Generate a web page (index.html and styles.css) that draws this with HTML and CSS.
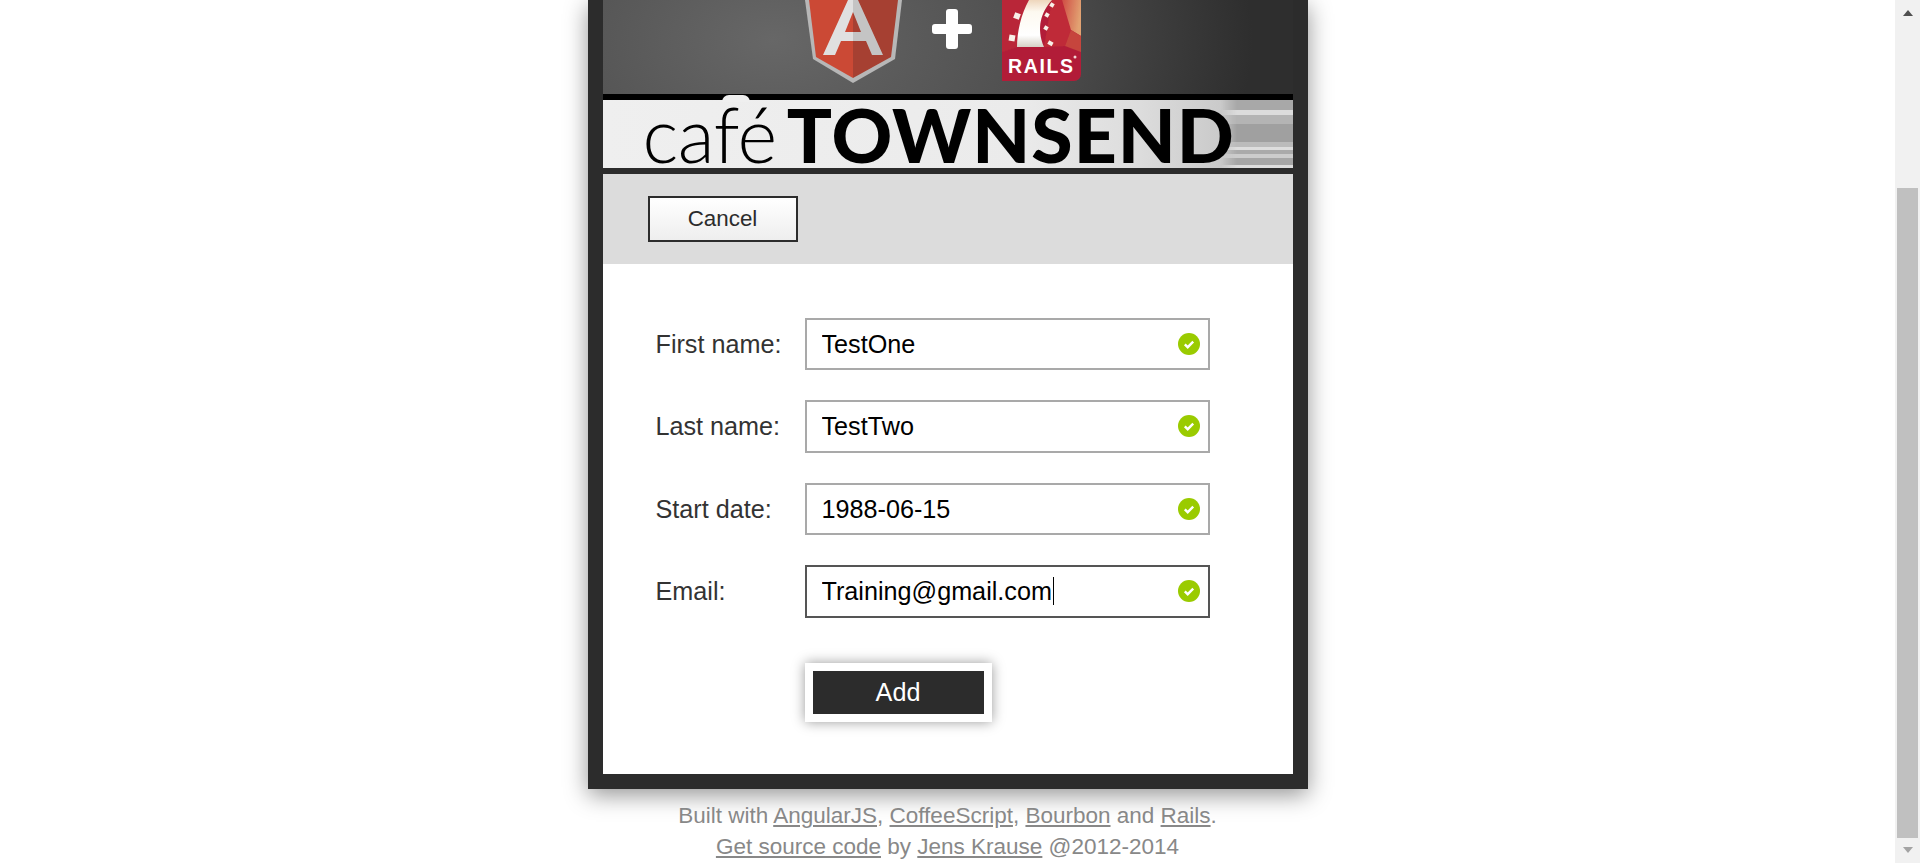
FILE: index.html
```html
<!DOCTYPE html>
<html lang="en">
<head>
<meta charset="utf-8">
<title>Café Townsend</title>
<link rel="stylesheet" href="styles.css">
</head>
<body>
<div class="screen">
  <main class="page">
    <section class="app">
      <header class="logos">
        <svg class="logos-art" viewBox="603 0 690 94" width="690" height="94" aria-label="Angular plus Rails">
          <defs>
            <linearGradient id="rails-curve" x1="0" y1="1" x2="0" y2="0">
              <stop offset="0" stop-color="#d6d2c6"/>
              <stop offset="0.25" stop-color="#ffffff"/>
              <stop offset="0.75" stop-color="#fdf9f0"/>
              <stop offset="1" stop-color="#eed6bc"/>
            </linearGradient>
            <linearGradient id="rails-facet" x1="0" y1="0" x2="1" y2="0.3">
              <stop offset="0" stop-color="#cf4c44"/>
              <stop offset="1" stop-color="#e2a272"/>
            </linearGradient>
            <filter id="soft" x="-5%" y="-5%" width="110%" height="110%"><feGaussianBlur stdDeviation="0.5"/></filter>
          </defs>
          <g filter="url(#soft)">
            <polygon points="805,0 902,0 895,59 853,83 813,59" fill="#b7b7b7"/>
            <polygon points="809,0 853,0 853,78 816,57" fill="#cb4936"/>
            <polygon points="853,0 898,0 891,57 853,78" fill="#a63f30"/>
            <polygon points="848,0 853,0 853,12 845,32 853,32 853,41 841,41 835,55 823,55" fill="#e0e0e0"/>
            <polygon points="853,0 858,0 883,55 872,55 866,41 853,41 853,32 861,32 853,12" fill="#c4c4c4"/>
          </g>
          <path d="M946 12a3 3 0 0 1 3-3h6a3 3 0 0 1 3 3v12h11a3 3 0 0 1 3 3v4a3 3 0 0 1-3 3h-11v12a3 3 0 0 1-3 3h-6a3 3 0 0 1-3-3v-12h-11a3 3 0 0 1-3-3v-4a3 3 0 0 1 3-3h11z" fill="#fff"/>
          <g filter="url(#soft)">
            <path d="M1002 0h79v74a7 7 0 0 1-7 7h-72z" fill="#b21f38"/>
            <polygon points="1002,0 1030,0 1017,47 1002,52" fill="#b92639"/>
            <polygon points="1052,0 1062,0 1073,26 1065,46 1044,47" fill="#bf2a37"/>
            <polygon points="1062,0 1081,0 1081,36 1071,30" fill="url(#rails-facet)"/>
            <polygon points="1065,46 1071,30 1081,36 1081,52" fill="#c6443e"/>
            <path d="M1017 47C1017 32 1021 14 1029 0H1052C1041 12 1036 28 1044 47z" fill="url(#rails-curve)"/>
            <g fill="#f8f0e8">
              <rect x="1014" y="13" width="6" height="6" transform="rotate(20 1017 16)"/>
              <rect x="1009" y="35" width="6" height="6" transform="rotate(10 1012 38)"/>
              <rect x="1048" y="41" width="5" height="4" transform="rotate(30 1050 43)"/>
              <rect x="1044" y="26" width="4" height="4" transform="rotate(30 1046 28)"/>
              <rect x="1045" y="13" width="4" height="4" transform="rotate(30 1047 15)"/>
              <rect x="1050" y="3" width="4" height="4" transform="rotate(30 1052 5)"/>
            </g>
          </g>
          <text class="rails-word" x="1008" y="73" textLength="65">RAILS</text>
          <circle cx="1075" cy="57" r="1.5" fill="#f3d6d6"/>
        </svg>
      </header>
      <div class="banner">
        <span class="banner-notch"></span>
        <span class="banner-cafe">café</span>
        <span class="banner-townsend">TOWNSEND</span>
      </div>
      <div class="toolbar">
        <button class="btn-cancel" type="button">Cancel</button>
      </div>
      <form class="form">
        <div class="row">
          <label class="row-label" for="first">First name:</label>
          <div class="field">
            <input class="field-input" id="first" type="text" value="TestOne">
            <svg class="field-check" viewBox="0 0 22 22" width="22" height="22"><circle cx="11" cy="11" r="11" fill="#9acb00"/><path d="M6.8 11.4l2.9 2.8 5.5-5.6" fill="none" stroke="#fff" stroke-width="2.4"/></svg>
          </div>
        </div>
        <div class="row">
          <label class="row-label" for="last">Last name:</label>
          <div class="field">
            <input class="field-input" id="last" type="text" value="TestTwo">
            <svg class="field-check" viewBox="0 0 22 22" width="22" height="22"><circle cx="11" cy="11" r="11" fill="#9acb00"/><path d="M6.8 11.4l2.9 2.8 5.5-5.6" fill="none" stroke="#fff" stroke-width="2.4"/></svg>
          </div>
        </div>
        <div class="row">
          <label class="row-label" for="start">Start date:</label>
          <div class="field">
            <input class="field-input" id="start" type="text" value="1988-06-15">
            <svg class="field-check" viewBox="0 0 22 22" width="22" height="22"><circle cx="11" cy="11" r="11" fill="#9acb00"/><path d="M6.8 11.4l2.9 2.8 5.5-5.6" fill="none" stroke="#fff" stroke-width="2.4"/></svg>
          </div>
        </div>
        <div class="row">
          <label class="row-label" for="email">Email:</label>
          <div class="field">
            <input class="field-input field-input-active" id="email" type="text" value="Training@gmail.com">
            <span class="field-caret"></span>
            <svg class="field-check" viewBox="0 0 22 22" width="22" height="22"><circle cx="11" cy="11" r="11" fill="#9acb00"/><path d="M6.8 11.4l2.9 2.8 5.5-5.6" fill="none" stroke="#fff" stroke-width="2.4"/></svg>
          </div>
        </div>
        <button class="btn-add" type="button">Add</button>
      </form>
    </section>
    <footer class="credits">
      <p class="credits-line">Built with <a href="#">AngularJS</a>, <a href="#">CoffeeScript</a>, <a href="#">Bourbon</a> and <a href="#">Rails</a>.</p>
      <p class="credits-line"><a href="#">Get source code</a> by <a href="#">Jens Krause</a> @2012-2014</p>
    </footer>
  </main>
  <aside class="scrollbar">
    <span class="scroll-up"></span>
    <span class="scroll-thumb"></span>
    <span class="scroll-down"></span>
  </aside>
</div>
</body>
</html>
```
FILE: styles.css
```css
* { box-sizing: border-box; }
html, body { margin: 0; height: 100%; overflow: hidden; background: #fff; }
body { font-family: "Liberation Sans", Arial, sans-serif; color: #333; }

.screen { display: flex; height: 863px; }
.page { flex: 1; min-width: 0; display: flex; flex-direction: column; align-items: center; }

.app {
  width: 720px;
  border: 15px solid #2c2c2c;
  border-top: 0;
  box-shadow: 0 6px 22px rgba(0, 0, 0, 0.42);
  background: #fff;
}

.logos {
  height: 94px;
  background: radial-gradient(ellipse 480px 300px at 170px 40px, #676767 0%, #4f4f4f 55%, #2e2e2e 100%);
}
.logos-art { display: block; }
.rails-word { font: 700 19.5px "Liberation Sans", Arial, sans-serif; fill: #fff; }

.banner {
  position: relative;
  height: 80px;
  border-top: 6px solid #000;
  border-bottom: 6px solid #2c2c2c;
  padding-left: 40px;
  display: flex;
  align-items: baseline;
  gap: 10px;
  background: linear-gradient(to right, #efefef 0%, #ebebeb 60%, #dcdcdc 78%, #c6c6c6 92%, #bdbdbd 100%);
  color: #000;
  line-height: 68px;
}
.banner::after {
  content: "";
  position: absolute;
  top: 0;
  bottom: 0;
  right: 0;
  width: 72px;
  background: linear-gradient(to bottom, #a8a8a8 0 10px, #dcdcdc 10px 15px, #b4b4b4 15px 24px, #a0a0a0 24px 42px, #bbb 42px 47px, #ddd 47px 50px, #aaa 50px 54px, #ccc 54px 58px, #a6a6a6 58px 65px, #ddd 65px 68px);
  -webkit-mask-image: linear-gradient(to right, transparent 0, #000 16px);
  mask-image: linear-gradient(to right, transparent 0, #000 16px);
}
.banner-notch {
  position: absolute;
  left: 119px;
  top: -5px;
  width: 28px;
  height: 7px;
  border-radius: 14px 14px 0 0;
  background: #efefef;
}
.banner-cafe, .banner-townsend { position: relative; z-index: 1; font-family: Lato, sans-serif; }
.banner-cafe { font-size: 76px; font-weight: 300; letter-spacing: -0.5px; }
.banner-townsend { font-size: 75px; font-weight: 900; letter-spacing: 1px; }

.toolbar { height: 90px; background: #dcdcdc; padding: 22px 0 0 45px; }
.btn-cancel {
  display: block;
  width: 150px;
  height: 46px;
  padding: 0;
  border: 2px solid #2c2c2c;
  border-radius: 0;
  background: linear-gradient(to bottom, #fff, #eee);
  color: #2c2c2c;
  font: 22.4px "Liberation Sans", Arial, sans-serif;
}

.form { display: flex; flex-direction: column; gap: 30.1px; padding: 53.9px 0 51.6px 53px; }
.row { display: flex; align-items: center; }
.row-label { width: 149px; font-size: 25.2px; color: #333; }
.field { position: relative; width: 405px; height: 52.4px; }
.field-input {
  display: block;
  width: 100%;
  height: 100%;
  padding: 0 50px 0 15px;
  border: 2px solid #a9a9a9;
  outline: 0;
  background: #fff;
  color: #000;
  font: 25.2px "Liberation Sans", Arial, sans-serif;
}
.field-input-active { border-color: #555; }
.field-check { position: absolute; right: 10px; top: 15px; }
.field-caret { position: absolute; left: 248px; top: 12px; width: 1px; height: 28px; background: #000; }

.btn-add {
  display: block;
  width: 187px;
  height: 59px;
  margin: 15.4px 0 0 149px;
  padding: 0;
  border: 8px solid #fff;
  border-radius: 0;
  background: #2c2c2c;
  color: #fff;
  font: 25.2px "Liberation Sans", Arial, sans-serif;
  box-shadow: 0 0 12px rgba(0, 0, 0, 0.4);
}

.credits { padding-top: 11px; text-align: center; color: #888; font-size: 22.5px; line-height: 31px; }
.credits-line { margin: 0; }
.credits a { color: #888; }

.scrollbar { width: 25px; height: 100%; flex: none; background: #f1f1f1; display: flex; flex-direction: column; align-items: center; }
.scroll-up { margin-top: 10px; border: 5.5px solid transparent; border-top: 0; border-bottom: 6px solid #505050; }
.scroll-thumb { width: 21px; height: 650px; margin-top: 172px; background: #c0c0c0; }
.scroll-down { margin-top: 9px; border: 5.5px solid transparent; border-bottom: 0; border-top: 6px solid #a3a3a3; }
```
